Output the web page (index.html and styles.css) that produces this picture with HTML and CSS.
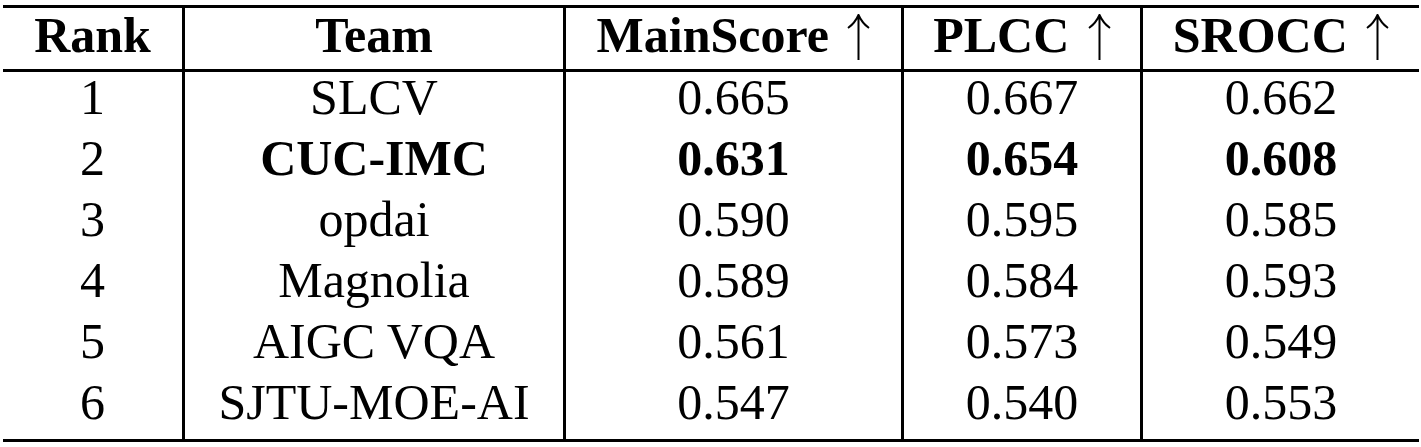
FILE: index.html
```html
<!DOCTYPE html>
<html lang="en">
<head>
  <meta charset="UTF-8" />
  <meta name="viewport" content="width=device-width, initial-scale=1.0"/>
  <title>Challenge Results</title>
  <link rel="stylesheet" href="styles.css">
</head>
<body>
  <table class="results">
    <thead>
      <tr>
        <th class="col-rank">Rank</th>
        <th class="col-team">Team</th>
        <th class="col-main">MainScore <svg class="up" viewBox="0 0 23 46"><path d="M11.5 1 V46 M1 14 Q8 9 11.5 1 Q15 9 22 14"/></svg></th>
        <th class="col-plcc">PLCC <svg class="up" viewBox="0 0 23 46"><path d="M11.5 1 V46 M1 14 Q8 9 11.5 1 Q15 9 22 14"/></svg></th>
        <th class="col-srocc">SROCC <svg class="up" viewBox="0 0 23 46"><path d="M11.5 1 V46 M1 14 Q8 9 11.5 1 Q15 9 22 14"/></svg></th>
      </tr>
    </thead>
    <tbody>
      <tr>
        <td>1</td><td>SLCV</td><td>0.665</td><td>0.667</td><td>0.662</td>
      </tr>
      <tr class="best">
        <td>2</td><td>CUC-IMC</td><td>0.631</td><td>0.654</td><td>0.608</td>
      </tr>
      <tr>
        <td>3</td><td>opdai</td><td>0.590</td><td>0.595</td><td>0.585</td>
      </tr>
      <tr>
        <td>4</td><td>Magnolia</td><td>0.589</td><td>0.584</td><td>0.593</td>
      </tr>
      <tr>
        <td>5</td><td>AIGC VQA</td><td>0.561</td><td>0.573</td><td>0.549</td>
      </tr>
      <tr class="last">
        <td>6</td><td>SJTU-MOE-AI</td><td>0.547</td><td>0.540</td><td>0.553</td>
      </tr>
    </tbody>
  </table>
</body>
</html>
```

FILE: styles.css
```css
body {
  margin: 0;
  padding: 5px 0 0 3px;
  background: #fff;
  color: #000;
  font-family: 'Liberation Serif', 'Times New Roman', serif;
}

.results {
  border-collapse: separate;
  border-spacing: 0;
  border-top: 3px solid #000;
  border-bottom: 3px solid #000;
  font-size: 50px;
}

.results th,
.results td {
  border-left: 3px solid #000;
  padding: 0 0 10px;
  line-height: 51px;
  text-align: center;
  white-space: nowrap;
}

.results th:first-child,
.results td:first-child {
  border-left: none;
}

.results th {
  font-weight: bold;
  line-height: 54px;
  padding-bottom: 7px;
  border-bottom: 3px solid #000;
}

.results .last td {
  padding-bottom: 11px;
}

.col-rank { width: 179px; }
.col-team { width: 378px; }
.col-main { width: 335px; }
.col-plcc { width: 236px; }
.col-srocc { width: 276px; }

.best td {
  font-weight: bold;
}

.best td:first-child {
  font-weight: normal;
}

.up {
  width: 23px;
  height: 46px;
  vertical-align: -8px;
  margin-left: 6px;
  fill: none;
  stroke: #000;
  stroke-width: 2;
}
```
